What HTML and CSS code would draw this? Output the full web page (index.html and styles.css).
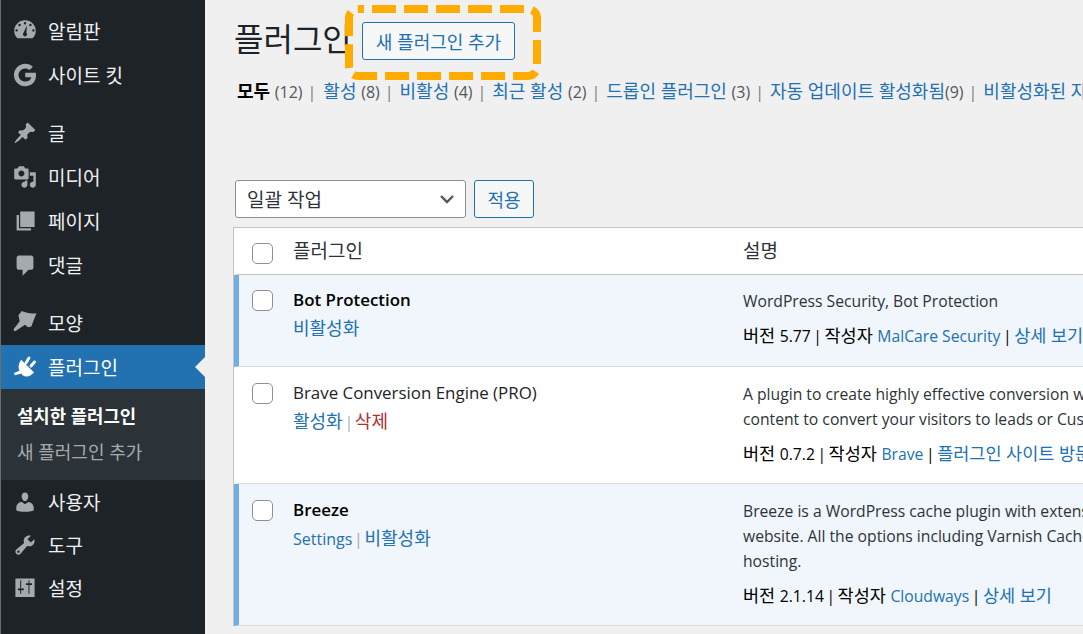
FILE: index.html
```html
<!DOCTYPE html>
<html lang="ko">
<head>
<meta charset="utf-8">
<title>플러그인</title>
<link rel="stylesheet" href="styles.css">
</head>
<body>
<div class="app">
  <nav class="side">
    <div class="item first"><svg class="ic" viewBox="0 0 20 20"><path d="M3.76 16h12.48C18 14.6 19 12.4 19 10c0-5-4-9-9-9s-9 4-9 9c0 2.400 1 4.600 2.760 6zM10 2.500a1 1 0 1 1 0 2 1 1 0 0 1 0-2zM5.500 4a1 1 0 1 1 0 2 1 1 0 0 1 0-2zm9 0a1 1 0 1 1 0 2 1 1 0 0 1 0-2zM3 8.500a1 1 0 1 1 0 2 1 1 0 0 1 0-2zm14 0a1 1 0 1 1 0 2 1 1 0 0 1 0-2zM11.500 5.500l-.3 6a1.700 1.700 0 1 1-2.400 0z" fill-rule="evenodd"/></svg><span>알림판</span></div>
    <div class="item"><svg class="ic" viewBox="0 0 20 20"><path d="M10.200 8.200v3.600h5.100c-.5 2.200-2.400 3.700-5.100 3.700-3.100 0-5.600-2.500-5.600-5.500s2.500-5.500 5.600-5.500c1.400 0 2.700.5 3.700 1.400l2.700-2.700C14.900 1.600 12.700.6 10.200.6 5 .6.800 4.800.8 10s4.200 9.400 9.400 9.400c5.400 0 9-3.800 9-9.100 0-.7-.1-1.400-.2-2.100z"/></svg><span>사이트 킷</span></div>
    <div class="item sep"><svg class="ic" viewBox="0 0 20 20"><path d="M10.440 3.020l1.820-1.820 6.360 6.350-1.830 1.820c-1.050-.68-2.480-.57-3.410.36l-.75.75c-.92.930-1.040 2.350-.35 3.400l-1.830 1.820-2.410-2.410-2.800 2.790c-.42.420-3.380 2.710-3.800 2.290s1.860-3.390 2.280-3.810l2.790-2.790L4.100 9.360l1.830-1.820c1.050.69 2.480.57 3.400-.36l.75-.75c.93-.92 1.050-2.350.36-3.410z"/></svg><span>글</span></div>
    <div class="item"><svg class="ic" viewBox="0 0 20 20"><path d="M13 11V4c0-.55-.45-1-1-1h-1.670L9 1H5L3.670 3H2c-.55 0-1 .45-1 1v7c0 .55.45 1 1 1h10c.55 0 1-.45 1-1zM7 4.500c1.380 0 2.500 1.120 2.500 2.500S8.380 9.500 7 9.500 4.500 8.380 4.500 7 5.620 4.500 7 4.500zM14 6h5v10.500c0 1.380-1.120 2.500-2.500 2.500S14 17.880 14 16.500s1.120-2.500 2.500-2.500c.17 0 .34.020.5.050V9h-3V6zm-4 8.050V13h2v3.500c0 1.380-1.120 2.500-2.500 2.500S7 17.880 7 16.500 8.120 14 9.500 14c.17 0 .34.020.5.050z" fill-rule="evenodd"/></svg><span>미디어</span></div>
    <div class="item"><svg class="ic" viewBox="0 0 20 20"><path d="M6 15V2h12v13H6zM3 18V5h2v11h10v2H3z"/></svg><span>페이지</span></div>
    <div class="item"><svg class="ic" viewBox="0 0 20 20"><path d="M5 2h10c1.100 0 2 .9 2 2v8c0 1.100-.9 2-2 2h-2l-5 5v-5H5c-1.100 0-2-.9-2-2V4c0-1.100.9-2 2-2z"/></svg><span>댓글</span></div>
    <div class="item sep"><svg class="ic" viewBox="0 0 20 20"><path d="M7.300 0C11 1.600 15.500 2.600 19.600 1.800 18 5.500 16.500 9.500 15.300 13L12.500 13.500 10 11.500 2.500 16.500C1.200 17.300-.1 16 .8 14.800L5.600 8.500 4.500 3.500z"/></svg><span>모양</span></div>
    <div class="item cur"><svg class="ic" viewBox="0 0 20 20"><path d="M6.800 4l10.800 10.500-2.600 2.200c-2 1.600-5 1.600-7 .2l-1-1.400-5.500 1.400-.7-1.800 4.500-1.900C4 10.200 4.800 6.700 6.800 4z"/><path class="prong" d="M10.800 6.700l2.500-4.200M15 9.200l2.900-3.400"/></svg><span>플러그인</span><i class="notch"></i></div>
    <div class="sub">
      <div class="sub-on">설치한 플러그인</div>
      <div class="sub-off">새 플러그인 추가</div>
    </div>
    <div class="item low"><svg class="ic" viewBox="0 0 20 20"><path d="M10 9.250c-2.270 0-2.730-3.440-2.730-3.440C7 4.020 7.820 2 9.970 2c2.160 0 2.980 2.020 2.710 3.810 0 0-.41 3.440-2.680 3.440zm0 2.570L12.720 10c2.390 0 4.520 2.330 4.520 4.530v2.490s-3.650 1.130-7.240 1.130c-3.650 0-7.240-1.130-7.240-1.130v-2.490c0-2.250 1.940-4.480 4.470-4.480z"/></svg><span>사용자</span></div>
    <div class="item low"><svg class="ic" viewBox="0 0 20 20"><path d="M16.680 9.770c-1.340 1.340-3.300 1.670-4.950.99l-5.410 6.520c-.99.990-2.590.99-3.580 0s-.99-2.590 0-3.570l6.520-5.420c-.68-1.650-.35-3.610.99-4.950 1.280-1.280 3.120-1.620 4.720-1.060l-2.890 2.890 2.820 2.820 2.860-2.870c.53 1.580.18 3.390-1.080 4.650zM3.810 16.210c.4.390 1.030.39 1.430 0 .4-.4.400-1.030 0-1.430-.4-.39-1.030-.39-1.430 0-.39.400-.39 1.030 0 1.430z"/></svg><span>도구</span></div>
    <div class="item low"><svg class="ic" viewBox="0 0 20 20"><path fill-rule="evenodd" d="M2 2h16v15.500H2zM6 3.500v7H4v1.300h2v3h.8v-3h2.200v-1.300H6.800v-7zM12.900 3.500v2.600h-2.100v1.300h2.100v7.400h.8V7.400h2.100V6.100h-2.100V3.500z"/></svg><span>설정</span></div>
  </nav>

  <main class="main">
    <div class="head">
      <h1>플러그인</h1>
      <a class="btn add">새 플러그인 추가</a>
      <svg class="callout" viewBox="0 0 196 75"><rect x="4" y="4" width="188" height="67" rx="9" ry="9" fill="none" stroke="#ffab00" stroke-width="8" stroke-dasharray="24 8" stroke-dashoffset="-14"/></svg>
    </div>
    <div class="filters">
      <b>모두</b> <span class="n">(12)</span><span class="bar first-bar">|</span><a>활성</a> <span class="n">(8)</span><span class="bar">|</span><a>비활성</a> <span class="n">(4)</span><span class="bar">|</span><a>최근 활성</a> <span class="n">(2)</span><span class="bar">|</span><a>드롭인 플러그인</a> <span class="n">(3)</span><span class="bar">|</span><a>자동 업데이트 활성화됨</a><span class="n">(9)</span><span class="bar">|</span><a>비활성화된 자동 업데이트</a><span class="n">(3)</span>
    </div>
    <div class="bulk">
      <div class="select"><span>일괄 작업</span><svg class="chev" viewBox="0 0 16 16"><path d="M2 5l6 6 6-6" fill="none" stroke="#50575e" stroke-width="2.400"/></svg></div>
      <a class="btn apply">적용</a>
    </div>
    <div class="table">
      <div class="row thead">
        <div class="cb-col"><i class="cb"></i></div>
        <div class="name th">플러그인</div>
        <div class="desc th">설명</div>
      </div>
      <div class="row active r1">
        <div class="cb-col"><i class="cb"></i></div>
        <div class="name"><b>Bot Protection</b><div class="acts"><a>비활성화</a></div></div>
        <div class="desc"><p>WordPress Security, Bot Protection</p><p class="meta">버전 <span class="l">5.77</span> <span class="vb">|</span> 작성자 <a class="l">MalCare Security</a> <span class="vb">|</span> <a>상세 보기</a></p></div>
      </div>
      <div class="row r2">
        <div class="cb-col"><i class="cb"></i></div>
        <div class="name"><span class="plain">Brave Conversion Engine (PRO)</span><div class="acts"><a>활성화</a> <span class="pipe">|</span> <a class="del">삭제</a></div></div>
        <div class="desc"><p>A plugin to create highly effective conversion widgets using your existing<br>content to convert your visitors to leads or Customers.</p><p class="meta">버전 <span class="l">0.7.2</span> <span class="vb">|</span> 작성자 <a class="l">Brave</a> <span class="vb">|</span> <a>플러그인 사이트 방문하기</a></p></div>
      </div>
      <div class="row active r3">
        <div class="cb-col"><i class="cb"></i></div>
        <div class="name"><b>Breeze</b><div class="acts"><a class="l16">Settings</a> <span class="pipe">|</span> <a>비활성화</a></div></div>
        <div class="desc"><p>Breeze is a WordPress cache plugin with extensive options to speed up your<br>website. All the options including Varnish Cache work well with Cloudways<br>hosting.</p><p class="meta">버전 <span class="l">2.1.14</span> <span class="vb">|</span> 작성자 <a class="l">Cloudways</a> <span class="vb">|</span> <a>상세 보기</a></p></div>
      </div>
    </div>
  </main>
</div>
</body>
</html>
```
FILE: styles.css
```css
* { box-sizing: border-box; }
html, body { margin: 0; padding: 0; height: 634px; overflow: hidden; }
body {
  width: 1083px;
  background: #f0f0f1;
  color: #3c434a;
  font-family: "Open Sans", "Noto Sans CJK KR", sans-serif;
  font-size: 18px;
}
a { color: #2271b1; text-decoration: none; }
b { font-weight: 600; }
.app { display: flex; height: 634px; }

.side {
  width: 205px;
  flex: none;
  height: 634px;
  background: #1d2327;
  border-left: 1px solid #6a6d70;
  color: #f0f0f1;
}
.item {
  display: flex;
  align-items: center;
  height: 44px;
  padding-left: 12px;
  gap: 11px;
  font-size: 19px;
  position: relative;
}
.item.first { margin-top: 9px; }
.item.sep { margin-top: 14px; }
.item.low { height: 43px; }
.ic { width: 24px; height: 24px; fill: #a7aaad; flex: none; }
.cur { background: #2271b1; color: #fff; }
.cur .ic { fill: #fff; }
.prong { fill: none; stroke: #fff; stroke-width: 2.4; stroke-linecap: round; }
.notch {
  position: absolute;
  right: 0;
  top: 12px;
  border: 10px solid transparent;
  border-right-color: #f0f0f1;
  border-left: 0;
}
.sub { background: #2c3338; height: 91px; padding: 9px 0 0 16px; font-size: 18px; }
.sub-on { height: 36px; line-height: 36px; color: #fff; font-weight: 700; font-size: 17.8px; }
.sub-off { height: 36px; line-height: 36px; color: #a7aaad; }

.main { flex: 1; min-width: 0; padding-left: 29px; overflow: hidden; }
.head { display: flex; align-items: flex-start; height: 80px; position: relative; }
h1 {
  margin: 17px 0 0;
  font-size: 32px;
  font-weight: 400;
  line-height: 44px;
  color: #1d2327;
  white-space: nowrap;
  width: 128px;
  flex: none;
}
.callout {
  position: absolute;
  left: 111px;
  top: 5px;
  width: 196px;
  height: 75px;
}
.btn {
  display: flex;
  align-items: center;
  justify-content: center;
  border: 1px solid #2271b1;
  border-radius: 3px;
  background: #f6f7f7;
  color: #2271b1;
}
.add { width: 153px; height: 38px; margin-top: 22px; font-size: 18px; }
.filters {
  white-space: nowrap;
  font-size: 18px;
  line-height: 22px;
  height: 100px;
}
.filters .n { color: #50575e; font-size: 16px; }
.filters b { color: #000; margin-left: 3px; }
.bar { color: #787c82; margin: 0 6px 0 5px; font-size: 16px; }
.first-bar { margin-right: 7px; }
.bulk { display: flex; gap: 8px; height: 38px; margin: 0 0 9px 1px; }
.select {
  width: 231px;
  height: 38px;
  background: #fff;
  border: 1px solid #8c8f94;
  border-radius: 3px;
  display: flex;
  align-items: center;
  justify-content: space-between;
  padding: 0 10px 0 11px;
  font-size: 19px;
  color: #2c3338;
}
.chev { width: 16px; height: 16px; }
.apply { width: 60px; height: 38px; font-size: 18px; }

.table {
  width: 900px;
  margin-left: -1px;
  border: 1px solid #c3c4c7;
  border-right: 0;
  border-bottom: 0;
  background: #fff;
}
.row { display: flex; border-bottom: 1px solid #dcdcde; border-left: 5px solid transparent; }
.thead { height: 47px; border-bottom-color: #c3c4c7; align-items: center; }
.active { background: #f0f6fc; border-left-color: #72aee6; }
.r1 { height: 92px; }
.r2 { height: 117px; padding-top: 1px; }
.r3 { height: 142px; padding-top: 1px; }
.cb-col { width: 54px; flex: none; padding-left: 13px; }
.row:not(.thead) .cb-col { padding-top: 15px; }
.thead .cb-col { padding-top: 4px; }
.cb {
  display: block;
  width: 21px;
  height: 21px;
  border: 1px solid #8c8f94;
  border-radius: 5px;
  background: #fff;
}
.name { width: 450px; flex: none; padding-top: 13px; line-height: 24px; font-size: 16.9px; color: #1d2327; }
.name b { color: #000; }
.th, .desc.th { padding-top: 0; color: #2c3338; line-height: 24px; font-size: 19px; }
.plain { color: #1d2327; }
.acts { margin-top: 4px; color: #8c8f94; line-height: 24px; font-size: 18px; }
.l16 { font-size: 16px; }
.pipe { color: #a7aaad; font-size: 16px; margin: 0 -3px; }
.del { color: #b32d2e; }
.desc { flex: 1; padding-top: 14px; font-size: 15.7px; color: #2c3338; white-space: nowrap; }
.desc p { margin: 0; line-height: 25px; }
.desc .meta { margin-top: 9px; color: #000; font-size: 17.5px; }
.l { font-size: 15.7px; }
.vb { font-size: 15.7px; margin: 0 -2px; color: #000; }
```
